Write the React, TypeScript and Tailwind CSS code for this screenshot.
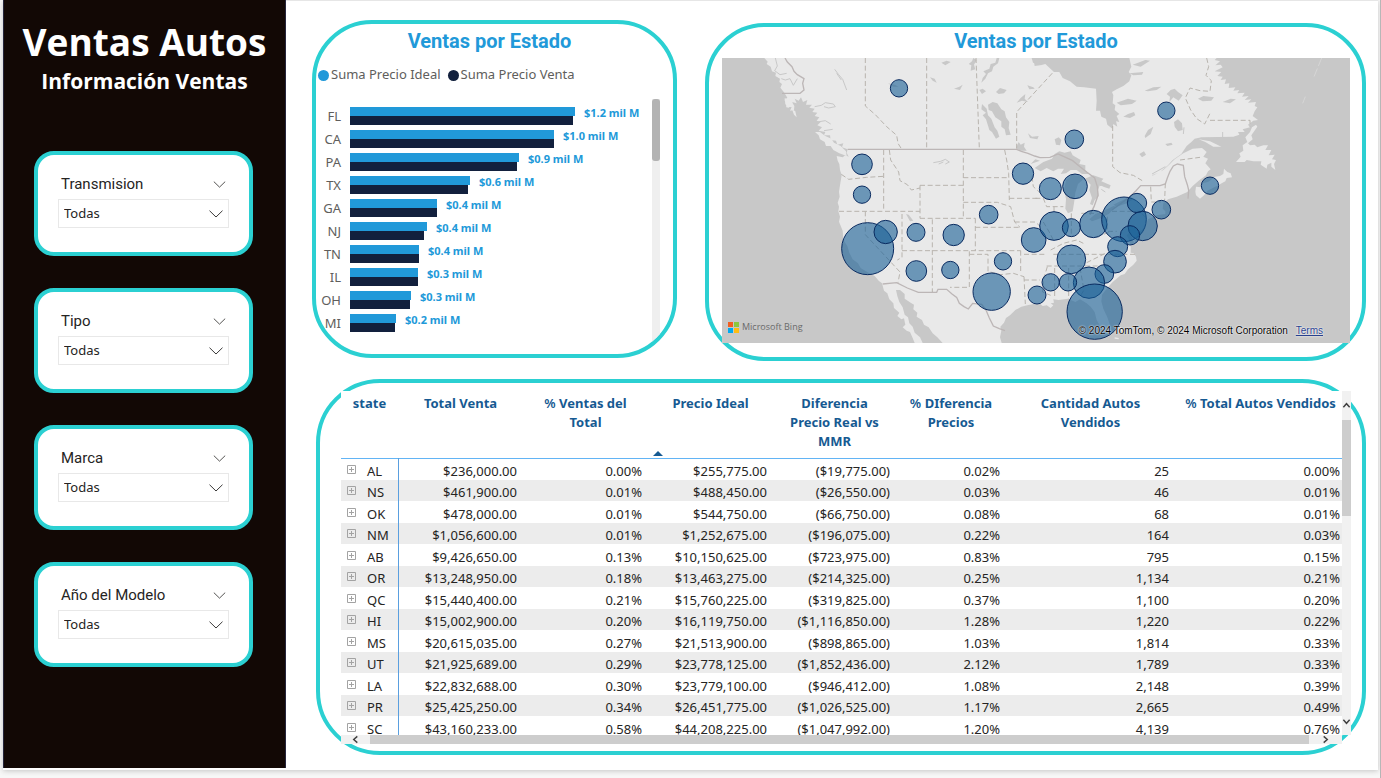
import React from "react";

const filters = ["Transmision", "Tipo", "Marca", "Año del Modelo"];

const bars = [
  { state: "FL", ideal: 225, sale: 223, label: "$1.2 mil M" },
  { state: "CA", ideal: 204, sale: 204, label: "$1.0 mil M" },
  { state: "PA", ideal: 169, sale: 167, label: "$0.9 mil M" },
  { state: "TX", ideal: 120, sale: 118, label: "$0.6 mil M" },
  { state: "GA", ideal: 87, sale: 87, label: "$0.4 mil M" },
  { state: "NJ", ideal: 77, sale: 74, label: "$0.4 mil M" },
  { state: "TN", ideal: 69, sale: 69, label: "$0.4 mil M" },
  { state: "IL", ideal: 68, sale: 68, label: "$0.3 mil M" },
  { state: "OH", ideal: 61, sale: 60, label: "$0.3 mil M" },
  { state: "MI", ideal: 46, sale: 45, label: "$0.2 mil M" },
];

const rows = [
  ["AL", "$236,000.00", "0.00%", "$255,775.00", "($19,775.00)", "0.02%", "25", "0.00%"],
  ["NS", "$461,900.00", "0.01%", "$488,450.00", "($26,550.00)", "0.03%", "46", "0.01%"],
  ["OK", "$478,000.00", "0.01%", "$544,750.00", "($66,750.00)", "0.08%", "68", "0.01%"],
  ["NM", "$1,056,600.00", "0.01%", "$1,252,675.00", "($196,075.00)", "0.22%", "164", "0.03%"],
  ["AB", "$9,426,650.00", "0.13%", "$10,150,625.00", "($723,975.00)", "0.83%", "795", "0.15%"],
  ["OR", "$13,248,950.00", "0.18%", "$13,463,275.00", "($214,325.00)", "0.25%", "1,134", "0.21%"],
  ["QC", "$15,440,400.00", "0.21%", "$15,760,225.00", "($319,825.00)", "0.37%", "1,100", "0.20%"],
  ["HI", "$15,002,900.00", "0.20%", "$16,119,750.00", "($1,116,850.00)", "1.28%", "1,220", "0.22%"],
  ["MS", "$20,615,035.00", "0.27%", "$21,513,900.00", "($898,865.00)", "1.03%", "1,814", "0.33%"],
  ["UT", "$21,925,689.00", "0.29%", "$23,778,125.00", "($1,852,436.00)", "2.12%", "1,789", "0.33%"],
  ["LA", "$22,832,688.00", "0.30%", "$23,779,100.00", "($946,412.00)", "1.08%", "2,148", "0.39%"],
  ["PR", "$25,425,250.00", "0.34%", "$26,451,775.00", "($1,026,525.00)", "1.17%", "2,665", "0.49%"],
  ["SC", "$43,160,233.00", "0.58%", "$44,208,225.00", "($1,047,992.00)", "1.20%", "4,139", "0.76%"],
];

const headers: { text: React.ReactNode; sorted?: boolean }[] = [
  { text: "state" },
  { text: "Total Venta" },
  { text: <><span className="font-semibold">%</span> Ventas del<br />Total</> },
  { text: "Precio Ideal", sorted: true },
  { text: <>Diferencia<br />Precio Real vs<br />MMR</> },
  { text: <><span className="font-semibold">%</span> DIferencia<br />Precios</> },
  { text: <>Cantidad Autos<br />Vendidos</> },
  { text: <><span className="font-semibold">%</span> Total Autos Vendidos</> },
];

const west: [number, number, number][] = [
  [597, 235, 26], [486, 463, 31], [486, 554, 26], [503, 716, 78], [557, 666, 35],
  [648, 667, 27], [761, 675, 32], [866, 614, 28], [649, 783, 31], [751, 780, 26],
  [875, 845, 56], [909, 754, 26], [969, 491, 32], [1001, 690, 37],
];

const east: [number, number, number][] = [
  [133, 388, 28], [409, 302, 26], [540, 527, 26], [61, 536, 33], [135, 529, 37],
  [72, 648, 43], [124, 653, 27], [190, 642, 41], [282, 628, 67], [321, 579, 29],
  [338, 648, 44], [394, 599, 28], [300, 676, 29], [263, 710, 30], [255, 755, 34],
  [223, 792, 28], [177, 818, 47], [114, 817, 26], [62, 817, 26], [124, 748, 43],
  [194, 905, 83], [21, 855, 27],
];

function Chevron({ className }: { className: string }) {
  return (
    <svg viewBox="0 0 14 8" className={className} fill="none" stroke="#3b3a39" strokeWidth="1" aria-hidden="true">
      <path d="M0.5 0.7 L7 7 L13.5 0.7" />
    </svg>
  );
}

function FilterCard({ name, id }: { name: string; id: string }) {
  return (
    <section className="h-[105px] rounded-[20px] border-4 border-[#2bd0d2] bg-white px-5 pt-[18px]">
      <div className="flex h-[26px] items-center justify-between px-[3px] pb-1">
        <label htmlFor={id} className="font-[Roboto] text-[15px] text-[#252423]">{name}</label>
        <button type="button" aria-label={`Opciones de ${name}`}>
          <Chevron className="h-[7px] w-[13px]" />
        </button>
      </div>
      <div className="relative">
        <select id={id} className="block h-[29px] w-full appearance-none border border-[#e8e8e8] bg-white px-[5px] text-[13px] text-[#252423]">
          <option>Todas</option>
        </select>
        <Chevron className="pointer-events-none absolute top-[11px] right-[6px] h-2 w-[14px]" />
      </div>
    </section>
  );
}

function BarChart() {
  return (
    <section className="h-[338px] w-[365px] shrink-0 self-start overflow-hidden rounded-[60px] border-4 border-[#2bd0d2] bg-white">
      <h2 className="pt-1 pr-[10px] text-center font-[Roboto] text-xl leading-[26px] font-bold text-[#2199d9]">Ventas por Estado</h2>
      <ul className="flex h-[30px] items-center gap-[7px] pt-3 pl-[2px] text-[13px] text-[#605e5c]">
        <li className="flex items-center gap-[2px]"><span className="h-[11px] w-[11px] rounded-full bg-[#2199d9]" />Suma Precio Ideal</li>
        <li className="flex items-center gap-[2px]"><span className="h-[11px] w-[11px] rounded-full bg-[#12203d]" />Suma Precio Venta</li>
      </ul>
      <div className="flex justify-between pt-[15px] pr-[13px]">
        <div className="pt-2">
          {bars.map((b) => (
            <div key={b.state} className="flex h-[23px] items-start">
              <span className="w-[34px] pr-[9px] text-right text-[13px] leading-[18px] text-[#605e5c]">{b.state}</span>
              <div>
                <div className="h-[9px] bg-[#2199d9]" style={{ width: b.ideal }} />
                <div className="h-[9px] bg-[#12203d]" style={{ width: b.sale }} />
              </div>
              <span className="pl-[9px] text-[11px] leading-3 font-bold whitespace-nowrap text-[#2199d9]">{b.label}</span>
            </div>
          ))}
        </div>
        <div className="h-[245px] w-2 bg-[#efefef]">
          <div className="h-[62px] rounded-[3px] bg-[#b3b3b3]" />
        </div>
      </div>
    </section>
  );
}

function MapDrawing() {
  return (
    <svg viewBox="66 144 1884 855" preserveAspectRatio="xMidYMid slice" className="block h-full w-full" role="img" aria-label="Mapa de ventas por estado">
      <rect x="-400" y="-100" width="2900" height="1400" fill="#c8c8c8" />
      <g fill="#e9e9e9">
        <path d="M193 144 L203 155 200 162 212 170 216 184 228 188 226 198 240 206 238 216 246 222 241 233 252 247 262 263 253 270 262 280 258 292 275 291 270 302 282 300 283 288 276 276 290 280 284 266 296 272 303 262 309 276 322 270 318 284 336 284 328 293 344 296 337 306 352 308 344 318 358 322 350 332 362 336 352 346 366 352 356 362 376 366 372 376 390 376 392 390 408 392 412 404 430 400 426 412 443 418 440 428 446 440 436 436 428 442 410 438 413 452 418 462 420 480 425 495 421 520 417 545 419 560 413 578 417 590 415 604 420 620 417 635 428 662 430 690 442 708 448 728 458 748 474 760 482 774 508 790 524 798 536 812 546 820 552 842 562 850 568 868 580 880 582 894 598 908 592 918 604 928 612 925 616 944 608 952 620 962 630 966 638 984 644 999 668 999 660 982 644 968 638 950 628 940 624 922 614 914 608 892 598 876 592 858 588 840 600 840 614 852 614 866 632 878 642 884 640 898 652 908 650 920 666 930 672 944 686 952 698 970 712 982 728 999 905 999 900 982 904 962 901 950 912 938 918 924 930 916 946 900 964 890 982 886 1000 882 1018 880 1028 888 1040 886 1052 894 1060 886 1052 880 1062 878 1060 868 1076 870 1104 866 1126 876 1140 868 1160 880 1172 890 1184 906 1190 930 1200 948 1210 962 1220 972 1228 966 1230 946 1222 922 1210 896 1204 874 1206 854 1220 836 1238 816 1262 796 1274 792 1284 778 1300 764 1310 752 1308 740 1302 730 1292 728 1292 712 1288 690 1280 676 1290 666 1298 690 1308 706 1304 690 1312 672 1336 650 1344 628 1370 616 1396 612 1396 604 1388 596 1390 580 1404 568 1430 560 1462 546 1478 528 1496 512 1518 496 1524 484 1532 478 1516 460 1524 446 1510 440 1520 426 1506 414 1478 416 1450 430 1424 448 1406 466 1390 480 1356 498 1358 495 1380 486 1404 466 1418 450 1444 432 1460 408 1474 396 1484 386 1504 382 1600 380 1618 374 1614 366 1634 366 1628 358 1650 352 1644 344 1660 332 1674 330 1658 318 1664 304 1672 292 1664 288 1668 276 1644 278 1654 268 1634 270 1646 258 1626 260 1634 248 1612 250 1618 240 1600 242 1606 232 1586 234 1588 220 1574 222 1578 208 1562 210 1568 200 1552 198 1564 186 1544 184 1568 172 1562 164 1546 166 1560 154 1544 150 1550 144 Z" />
        <path d="M345 366 L360 366 376 378 394 386 402 398 422 408 438 424 440 438 418 430 400 420 392 408 378 408 374 396 360 388 356 376 Z" />
        <path d="M254 264 L266 270 278 266 276 284 264 294 256 282 Z M276 298 L286 304 290 322 282 314 Z" />
        <path d="M1486 545 L1488 530 1504 532 1506 520 1524 516 1546 500 1560 498 1570 492 1572 476 1582 486 1592 490 1596 502 1580 504 1576 514 1546 530 1522 542 1512 556 1500 566 1488 556 Z" />
        <path d="M1496 388 L1530 394 1564 410 1540 410 1516 396 Z" />
        <path d="M1608 456 L1622 440 1618 430 1630 422 1628 406 1642 396 1636 382 1650 366 1656 352 1668 344 1672 350 1654 376 1658 388 1644 400 1650 406 1664 404 1672 412 1690 406 1704 406 1696 420 1714 420 1706 436 1724 434 1716 448 1728 450 1722 462 1726 480 1714 470 1714 458 1702 464 1700 476 1682 464 1684 454 1660 454 1640 450 1634 456 Z" />
      </g>
      <g fill="#c8c8c8">
        <path d="M995 144 L999 158 1022 166 1036 162 1062 186 1078 186 1088 204 1110 214 1130 230 1152 232 1188 236 1190 272 1188 302 1200 302 1204 320 1218 326 1222 344 1237 356 1240 342 1252 350 1248 334 1258 336 1250 318 1258 312 1244 300 1246 286 1238 280 1240 256 1236 246 1250 238 1270 228 1288 214 1294 196 1286 186 1294 170 1288 144 Z" />
        <path d="M1004 474 L1030 456 1056 446 1064 432 1078 424 1094 428 1112 424 1118 436 1142 450 1138 462 1156 466 1156 482 1168 492 1146 492 1130 480 1112 480 1098 490 1082 492 1092 476 1074 476 1060 484 1040 474 1022 484 Z" />
        <path d="M1098 510 L1116 494 1138 498 1154 504 1134 522 1126 548 1122 580 1118 604 1104 610 1096 596 1098 566 1092 540 Z" />
        <path d="M1154 506 L1180 496 1210 506 1204 514 1232 526 1228 536 1210 530 1200 524 1194 540 1196 558 1184 570 1178 586 1170 582 1176 564 1168 540 1172 524 Z" />
        <path d="M1168 628 L1186 612 1212 602 1240 588 1248 590 1226 612 1194 628 1176 634 Z M1240 584 L1256 576 1290 560 1300 568 1280 580 1250 590 Z" />
        <path d="M864 284 L878 276 892 280 904 298 914 304 918 322 928 336 926 354 932 374 918 376 914 358 904 350 904 334 886 322 876 304 866 300 Z M846 282 L860 296 864 316 874 326 884 352 892 362 898 380 888 386 876 366 868 360 858 328 848 316 858 308 844 298 Z" />
        <path d="M898 144 L894 160 880 170 876 184 864 190 856 206 844 218 848 204 858 192 850 184 868 176 872 162 886 158 890 144 Z M820 144 L830 150 822 164 826 178 812 182 814 166 806 162 816 154 Z M724 158 L740 152 752 156 736 166 Z M690 202 L704 206 710 218 698 212 Z M762 236 L778 230 788 224 780 240 Z M838 240 L848 236 858 244 846 252 Z M888 246 L900 234 920 240 912 250 896 252 Z M950 278 L962 264 976 252 974 266 984 276 966 272 Z M982 226 L1000 232 1004 236 988 238 Z M1000 144 L1014 144 1020 166 1004 168 Z" />
        <path d="M948 414 L956 396 962 404 974 398 972 410 980 422 960 422 Z M984 370 L996 380 1016 378 1012 388 990 384 Z M1064 388 L1076 382 1084 390 1080 406 1068 404 Z M618 612 L626 614 640 632 630 634 Z M564 220 L584 224 596 230 580 230 Z" />
        <path d="M1298 164 L1336 150 1350 152 1322 170 Z M1288 190 L1330 186 1326 194 1300 196 Z M1334 242 L1360 232 1384 230 1370 240 1344 244 Z M1250 278 L1284 266 1310 272 1296 282 1262 286 Z M1270 320 L1284 312 1302 306 1306 316 1290 324 Z M1400 252 L1412 240 1424 236 1434 246 1448 256 1436 272 1420 262 1408 276 1410 260 Z M1334 378 L1344 360 1360 350 1352 372 1336 384 Z M1422 336 L1434 328 1446 340 1448 360 1434 364 1424 350 Z M1318 432 L1332 424 1338 434 1326 442 Z M1494 266 L1510 258 1542 262 1534 272 1508 274 Z M1396 402 L1414 398 1418 404 1402 408 Z M1568 276 L1592 266 1608 268 1590 280 Z M1188 516 L1206 518 1222 526 1200 528 Z M992 462 L1006 448 1020 452 Z" />
      </g>
      <g fill="none" stroke="#c8c8c8" strokeWidth="3">
        <path d="M404 178 L416 194 428 208 440 240 M410 190 L424 210 M344 290 L364 286 376 278 400 282 406 290 386 294 372 290 M700 458 L722 454 736 448 748 456 736 462 M716 462 L730 456 M226 144 L232 168 224 182 240 194 260 190 M244 206 L256 210 270 206 280 226 292 206 M352 336 L376 332 392 342 M372 362 L398 358" />
        <path d="M1204 538 L1216 546 M1340 152 L1320 164 M1356 492 L1396 470 M1568 366 L1568 382 M1452 352 L1450 372" />
      </g>
      <g fill="none" stroke="#bcb6b6" strokeWidth="4">
        <path d="M246 250 L300 250 312 240 308 220 312 206 292 194 282 184 276 170 262 156 255 144" />
        <path d="M443 418 L950 418 964 424 984 430 1004 438 1020 443 1050 442 1074 432 1092 440 1118 452 1140 470 1160 486 1184 504 1192 530 1194 556 1182 590 1170 614 M1236 600 L1290 560 1308 542 1322 527 1380 527 1396 522 1402 504 1410 484 1420 468 1432 462 1450 466 1454 500 1462 524 1466 540 1464 566" />
        <path d="M548 822 L590 818 622 834 655 847 710 847 714 838 740 838 756 852 770 862 778 880 792 890 805 897 818 880 845 883 858 900 868 924 880 948 898 956 915 962" />
      </g>
      <g fill="none" stroke="#b8b4ae" strokeWidth="3" strokeDasharray="15 8">
        <path d="M496 144 L496 288 526 314 560 350 590 376 594 400 604 416 M680 144 V416 M828 144 L838 416 M950 416 L950 306 1062 184" />
        <path d="M551 420 V602 M568 420 L572 450 596 486 600 512 622 524 634 540 660 534 M424 493 L446 508 500 502 551 499 M417 604 H660 M660 526 H790 M660 526 V625 M660 625 H826 M496 604 V674 L600 786 594 818 M606 612 V742 L592 750 M606 722 H962 M697 628 V846 M790 420 V625 M790 503 H926 M914 420 L920 450 926 490 928 570 M790 577 H892 L932 590 944 636 960 652 M826 625 V722 M826 652 H958 M808 724 V832 H750 M808 733 H864 V784 L900 794 940 790 972 800 M928 565 H1016 M944 636 H1006 L1024 652 M962 722 V790 M972 733 H1040 M972 800 L976 882 M972 810 H1020 M996 500 L1000 530 1020 548" />
        <path d="M1238 348 V470 L1260 488 1300 496 1330 514 M1520 144 L1526 170 1518 196 1534 212 1530 244 1500 242 1470 234 1456 264 1472 300 1490 326 1514 342 1530 310 M1530 331 H1650 V350 M1440 450 L1470 446 1500 442 M1352 530 L1354 576 1382 576 M1396 520 L1394 570 M1236 604 H1320 L1334 620 M1006 565 H1030 L1040 590 1090 590 M1030 636 L1050 670 1060 690 M1062 590 V610 M1114 610 V680 M1144 610 H1190 M1222 620 V664 L1250 664 M1060 733 H1310 M1040 768 H1200 M1106 774 V868 M1042 770 L1030 810 1028 846 1052 856 M1064 774 V860 M1140 774 L1152 840 1140 860 M1052 720 L1090 700 1130 690 1150 700 M1190 680 L1236 664 M1160 758 L1220 728" />
      </g>
      <path d="M1865 144 L1840 205 M1816 260 L1808 280" stroke="#dcdcdc" strokeWidth="2" strokeDasharray="26 8" />
      <path d="M1244 984 L1256 986 M1260 952 L1270 968" stroke="#e9e9e9" strokeWidth="4" />
      <g fill="#175f96" fillOpacity="0.6" stroke="#0a2b60" strokeWidth="3">
        {west.map(([x, y, r]) => <circle key={`w${x}-${y}`} cx={x} cy={y} r={r} />)}
        {east.map(([x, y, r]) => <circle key={`e${x}-${y}`} cx={x + 990} cy={y} r={r} />)}
      </g>
    </svg>
  );
}

function MapCard() {
  return (
    <section className="h-[338px] min-w-0 flex-1 self-end rounded-[60px] border-4 border-[#2bd0d2] bg-white pr-3 pl-[13px]">
      <h2 className="pb-[3px] text-center font-[Roboto] text-xl leading-7 font-bold text-[#2199d9]">Ventas por Estado</h2>
      <div className="relative h-[285px]">
        <MapDrawing />
        <div className="absolute bottom-[10px] left-[6px] flex items-center gap-[3px] font-['Open_Sans'] text-[9px] leading-3 text-[#6a6a6a]">
          <svg viewBox="0 0 11 11" className="h-[11px] w-[11px]" aria-hidden="true">
            <path fill="#f25f22" d="M0 0h5v5H0z" />
            <path fill="#8bc83f" d="M6 0h5v5H6z" />
            <path fill="#00a9f0" d="M0 6h5v5H0z" />
            <path fill="#fdbd12" d="M6 6h5v5H6z" />
          </svg>
          Microsoft Bing
        </div>
        <div className="absolute right-[27px] bottom-[6px] flex gap-2 font-['Liberation_Sans'] text-[10px] leading-3 text-black [text-shadow:0_0_2px_#fff,0_0_1px_#fff]">
          <span>© 2024 TomTom, © 2024 Microsoft Corporation</span>
          <a href="#terms" className="text-[#29418f] underline">Terms</a>
        </div>
      </div>
    </section>
  );
}

function Arrow({ d }: { d: string }) {
  return (
    <svg viewBox="0 0 10 10" className="h-[9px] w-[9px]" fill="none" stroke="#404040" strokeWidth="1.6" aria-hidden="true">
      <path d={d} />
    </svg>
  );
}

function StateTable() {
  return (
    <section className="ml-1 h-[376px] rounded-[64px] border-4 border-[#2bd0d2] bg-white pt-2 pr-[11px] pl-[21px]">
      <div className="relative flex h-[344px] bg-white">
        <div className="min-w-0 flex-1 overflow-hidden">
          <table className="w-full min-w-[1005px] table-fixed border-collapse text-[13px]">
            <colgroup>
              <col className="w-[57px]" />
              <col className="w-[125px]" />
              <col className="w-[125px]" />
              <col className="w-[125px]" />
              <col className="w-[123px]" />
              <col className="w-[110px]" />
              <col className="w-[169px]" />
              <col className="w-[171px]" />
            </colgroup>
            <thead>
              <tr className="h-[67px] border-b border-[#62b4f5] align-top text-[#165a92]">
                {headers.map((h, i) => (
                  <th key={i} scope="col" className="relative px-1 pt-[3px] leading-[19px] font-bold">
                    {h.text}
                    {h.sorted && <span className="absolute bottom-[2px] left-[5px] border-x-[5px] border-b-[5px] border-x-transparent border-b-[#165a92]" />}
                  </th>
                ))}
              </tr>
            </thead>
            <tbody className="text-[#252423]">
              {rows.map((r) => (
                <tr key={r[0]} className="h-[22px] even:h-[21px] even:bg-[#ececec]">
                  {r.map((c, i) =>
                    i === 0 ? (
                      <th key={i} scope="row" className="border-r border-[#5a9fdf] p-0 pl-[6px] font-normal">
                        <span className="flex items-center gap-[11px]">
                          <button type="button" aria-label={`Expandir ${c}`} className="shrink-0">
                            <svg viewBox="0 0 9 9" className="block h-[9px] w-[9px]" fill="none" stroke="#a3a3a3" aria-hidden="true">
                              <path d="M0.5 0.5h8v8h-8z M2 4.5h5 M4.5 2v5" />
                            </svg>
                          </button>
                          <span className="pt-1 leading-[17px]">{c}</span>
                        </span>
                      </th>
                    ) : (
                      <td key={i} className="p-0 pt-1 pr-[6px] text-right leading-[17px]">{c}</td>
                    )
                  )}
                </tr>
              ))}
            </tbody>
          </table>
        </div>
        <div className="flex w-[9px] shrink-0 flex-col justify-between bg-[#f1f1f1]">
          <div>
            <div className="flex h-[29px] items-center"><Arrow d="M1.5 7 L5 3 L8.5 7" /></div>
            <div className="h-24 bg-[#cdcdcd]" />
          </div>
          <div className="flex h-[27px] items-center"><Arrow d="M1.5 3 L5 7 L8.5 3" /></div>
        </div>
      </div>
      <div className="relative mr-[9px] flex h-[9px] bg-[#f1f1f1]">
        <span className="flex w-[29px] justify-center"><Arrow d="M7 1.5 L3 5 L7 8.5" /></span>
        <span className="flex-1 bg-[#cdcdcd]" />
        <span className="flex w-[33px] justify-center"><Arrow d="M3 1.5 L7 5 L3 8.5" /></span>
      </div>
    </section>
  );
}

export default function App() {
  return (
    <div className="min-h-screen border-r border-[#b5b5b5] bg-[#f7f7f7] pr-[2px] pl-[3px] font-['Noto_Sans',sans-serif]">
      <div className="flex bg-white shadow-[0_1px_5px_#c4c4c4]">
        <aside className="mb-[2px] w-[283px] shrink-0 border-x border-[#26263c] bg-[#120805]">
          <header className="pt-[17px] text-center font-['Open_Sans'] font-bold text-white">
            <h1 className="text-[37px] leading-[50px]">Ventas Autos</h1>
            <p className="text-[21px] leading-7">Información Ventas</p>
          </header>
          <div className="flex flex-col gap-8 pt-14 pr-8 pl-[30px]">
            {filters.map((f, i) => <FilterCard key={f} name={f} id={`filter-${i}`} />)}
          </div>
        </aside>
        <main className="flex min-w-0 flex-1 flex-col gap-[18px] border-t border-[#e6e6e6] pt-[19px] pr-3 pb-[15px] pl-[26px]">
          <div className="flex h-[341px] gap-7">
            <BarChart />
            <MapCard />
          </div>
          <StateTable />
        </main>
      </div>
    </div>
  );
}
